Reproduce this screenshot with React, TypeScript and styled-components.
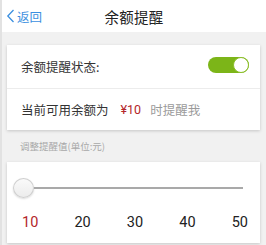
import { createGlobalStyle } from "styled-components";
import styled from "styled-components";

const Global = createGlobalStyle`
  html, body { margin: 0; padding: 0; }
  body {
    background: #f1f1f1;
    font-family: Roboto, "Noto Sans CJK SC", sans-serif;
  }
`;

const Page = styled.div`
  width: 266px;
  height: 245px;
  overflow: hidden;
  background: #f1f1f1;
  border-left: 2px solid #e2e2e2;
  box-sizing: border-box;
`;

const Header = styled.div`
  height: 32px;
  background: #fff;
  display: grid;
  grid-template-columns: 1fr auto 1fr;
  align-items: center;
  padding: 0 4px;
`;

const Back = styled.a`
  display: flex;
  align-items: center;
  gap: 2px;
  color: #3b8fe0;
  font-size: 12.5px;
  font-family: "Noto Sans CJK SC", sans-serif;
`;

const Title = styled.div`
  font-size: 14.5px;
  color: #222;
  font-family: "Noto Sans CJK SC", sans-serif;
  letter-spacing: 0.2px;
`;

const Card = styled.div<{ $top: number }>`
  margin: ${(p) => p.$top}px 6px 0 5px;
  background: #fff;
  box-shadow: 0 1px 3px rgba(0, 0, 0, 0.18);
`;

const Row = styled.div<{ $h: number; $line?: boolean }>`
  height: ${(p) => p.$h}px;
  display: flex;
  align-items: center;
  padding: 0 11px 0 14px;
  border-bottom: ${(p) => (p.$line ? "1px solid #ececec" : "none")};
  font-family: "Noto Sans CJK SC", sans-serif;
  font-size: 12.5px;
  color: #333;
`;

const Spacer = styled.div`
  flex: 1;
`;

const Toggle = styled.div`
  width: 41px;
  height: 16px;
  border-radius: 8px;
  background: #7cb518;
  position: relative;
  margin-top: -3px;
`;

const Knob = styled.div`
  position: absolute;
  right: 0;
  top: 0;
  width: 16px;
  height: 16px;
  box-sizing: border-box;
  border-radius: 50%;
  background: #fff;
  border: 1.5px solid #8cbf2a;
`;

const Money = styled.span`
  color: #b3262a;
  font-family: Roboto, "Noto Sans CJK SC", sans-serif;
  margin: 0 9px 0 12px;
`;

const Hint = styled.span`
  color: #9a9a9a;
`;

const Label = styled.div`
  margin-top: 10px;
  padding-left: 18px;
  font-size: 9.5px;
  color: #a8a8a8;
  font-family: "Noto Sans CJK SC", sans-serif;
  line-height: 12px;
`;

const SliderCard = styled(Card)`
  height: 81px;
  display: flex;
  flex-direction: column;
`;

const Slider = styled.div`
  display: flex;
  align-items: center;
  margin: 16px 17px 0 6px;
`;

const Thumb = styled.div`
  width: 21px;
  height: 20px;
  border-radius: 50%;
  background: linear-gradient(#fafafa, #ececec);
  border: 1px solid #cfcfcf;
  box-sizing: border-box;
  box-shadow: 0 1px 2px rgba(0, 0, 0, 0.15);
`;

const Track = styled.div`
  flex: 1;
  height: 2px;
  background: #a9a9a9;
`;

const Ticks = styled.div`
  display: flex;
  justify-content: space-between;
  margin: 16px 12px 0 15px;
  font-size: 14.5px;
  font-family: Roboto, sans-serif;
`;

const Tick = styled.span<{ $on?: boolean }>`
  color: ${(p) => (p.$on ? "#b3262a" : "#222")};
`;

export default function App() {
  return (
    <Page>
      <Global />
      <Header>
        <Back>
          <svg width="9" height="14" viewBox="0 0 9 14">
            <path d="M7.5 1 L1.8 7 L7.5 13" fill="none" stroke="#3b8fe0" strokeWidth="1.3" />
          </svg>
          返回
        </Back>
        <Title>余额提醒</Title>
        <div />
      </Header>
      <Card $top={13}>
        <Row $h={43} $line>
          余额提醒状态:
          <Spacer />
          <Toggle>
            <Knob />
          </Toggle>
        </Row>
        <Row $h={41}>
          当前可用余额为<Money>¥10</Money>
          <Hint>时提醒我</Hint>
        </Row>
      </Card>
      <Label>调整提醒值(单位:元)</Label>
      <SliderCard $top={10}>
        <Slider>
          <Thumb />
          <Track />
        </Slider>
        <Ticks>
          {[10, 20, 30, 40, 50].map((v, i) => (
            <Tick key={v} $on={i === 0}>
              {v}
            </Tick>
          ))}
        </Ticks>
      </SliderCard>
    </Page>
  );
}
